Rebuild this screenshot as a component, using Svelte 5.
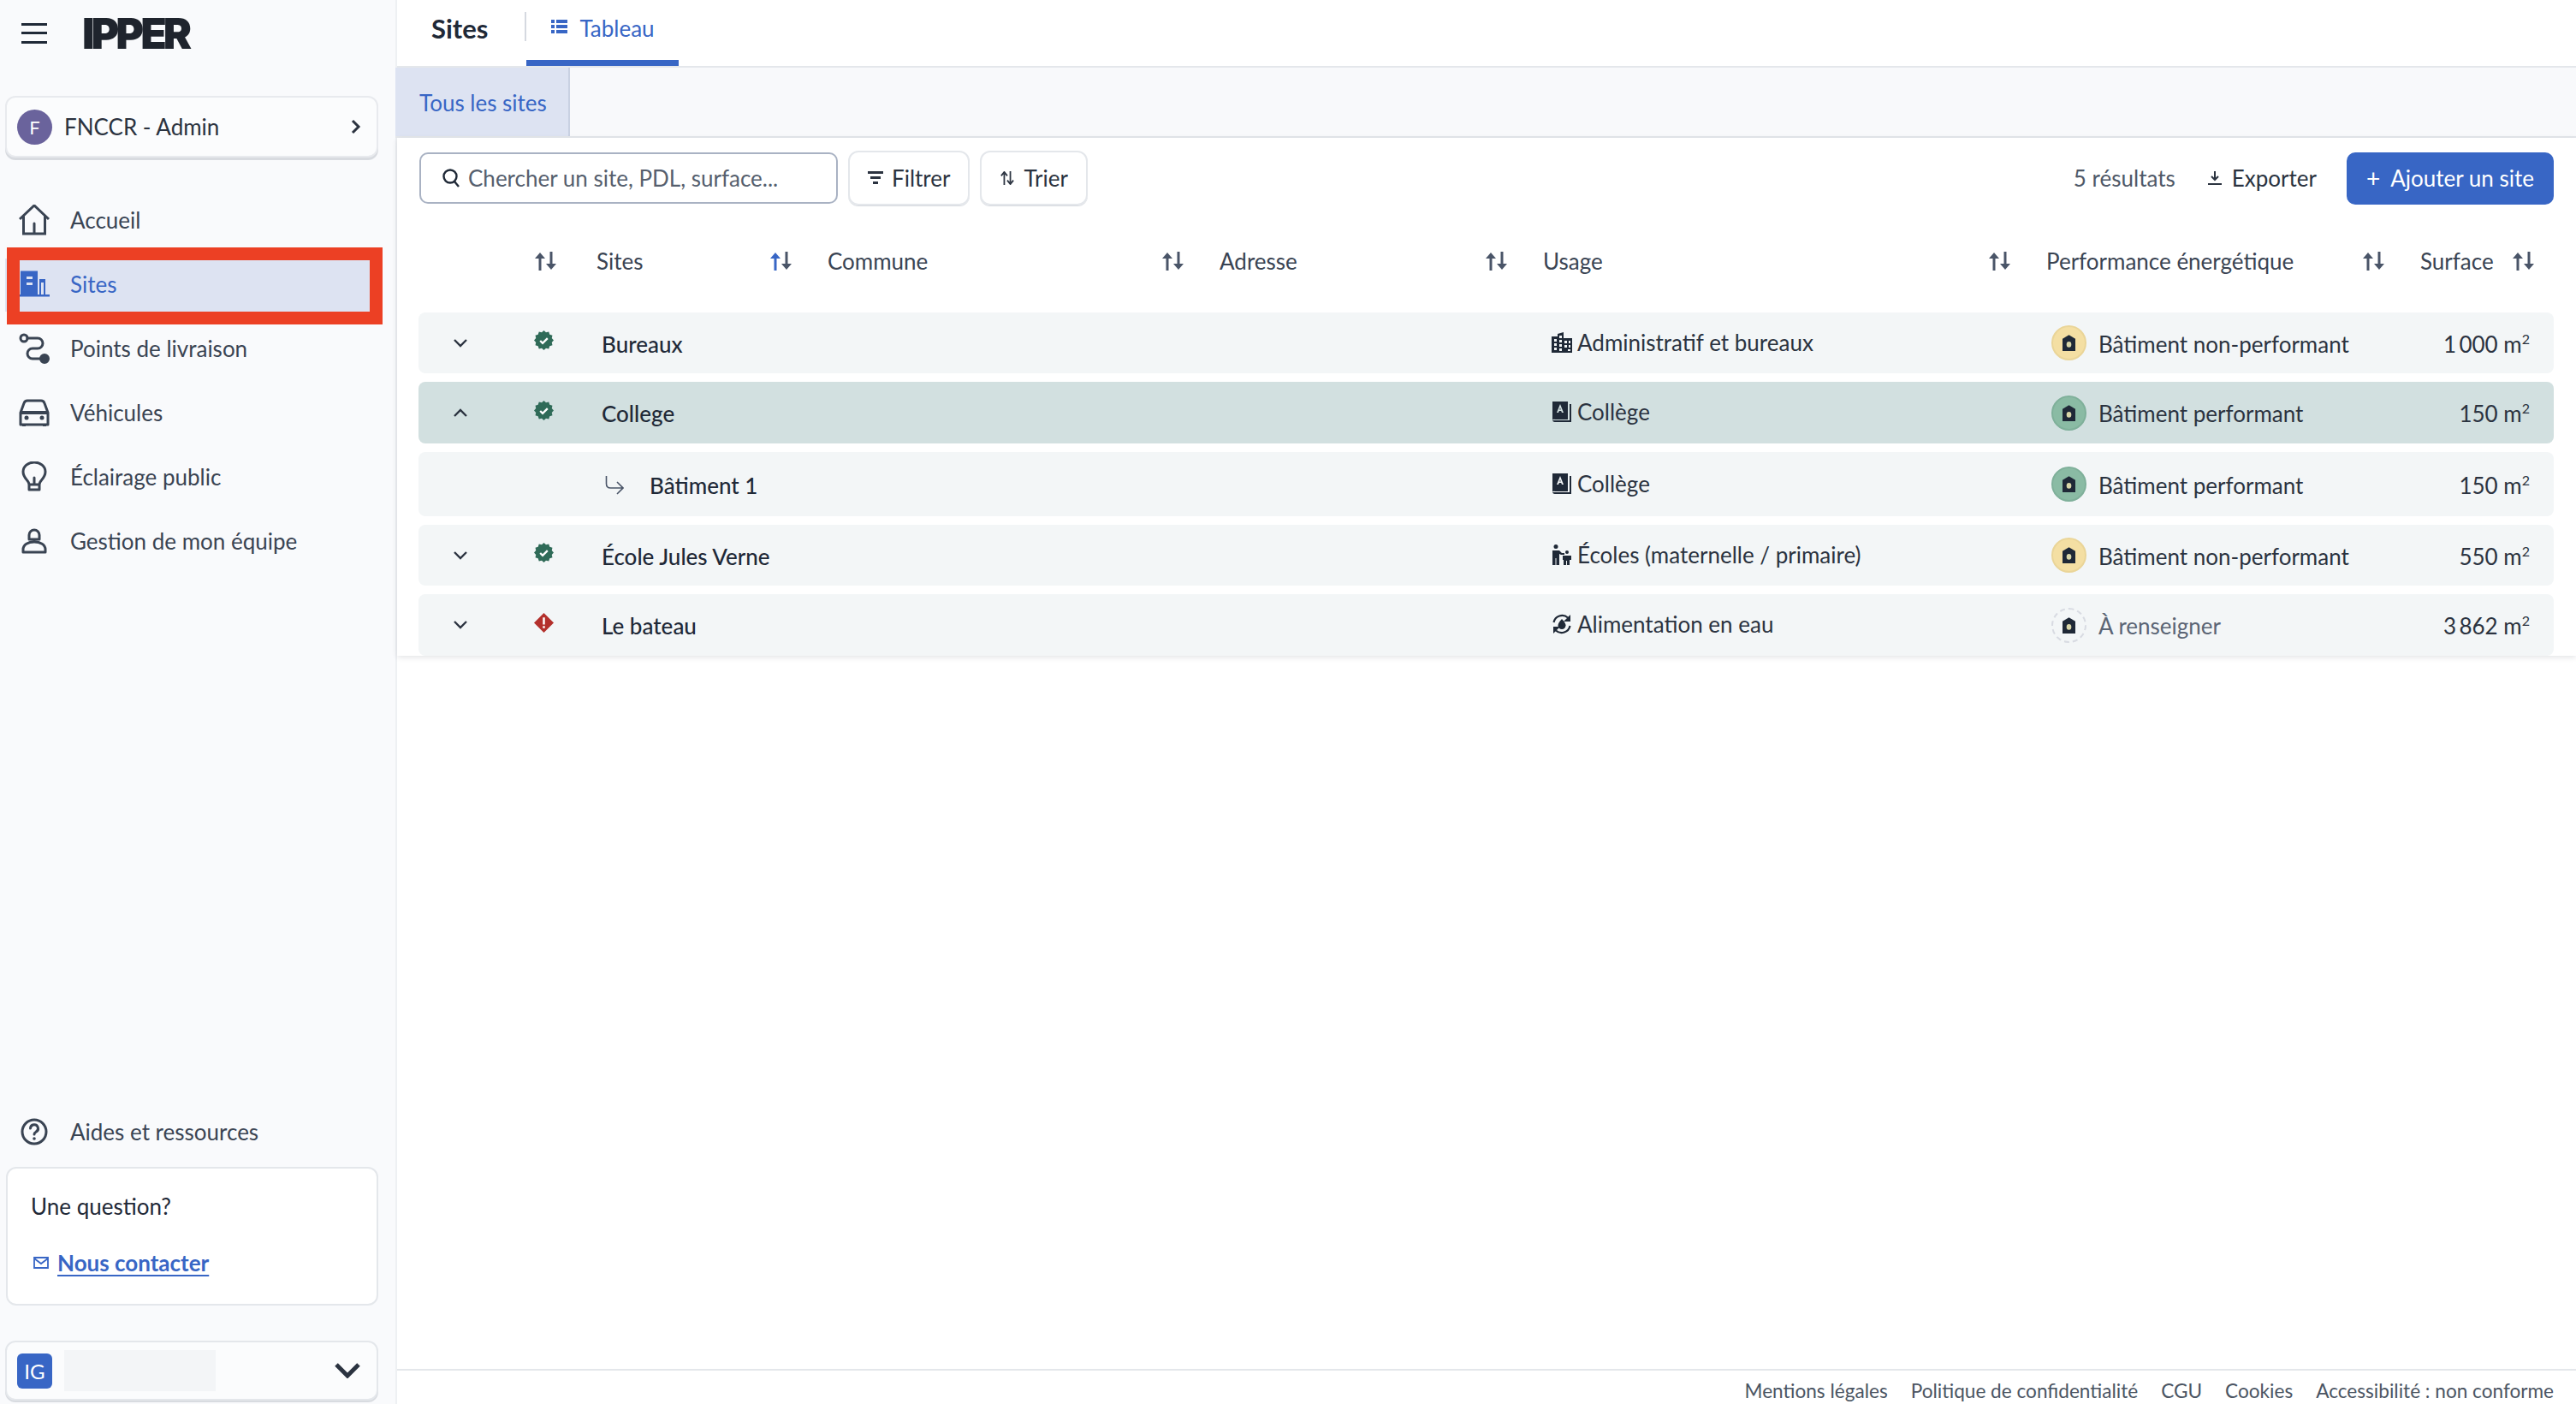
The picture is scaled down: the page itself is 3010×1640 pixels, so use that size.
<script>
  const nav = [
    { id: "home", label: "Accueil" },
    { id: "sites", label: "Sites", active: true },
    { id: "route", label: "Points de livraison" },
    { id: "car", label: "Véhicules" },
    { id: "bulb", label: "Éclairage public" },
    { id: "user", label: "Gestion de mon équipe" }
  ];

  const columns = [
    { label: "Sites", active: true },
    { label: "Commune" },
    { label: "Adresse" },
    { label: "Usage" },
    { label: "Performance énergétique" },
    { label: "Surface" }
  ];

  const rows = [
    { name: "Bureaux", h: 71, chevron: "down", status: "ok", usageIcon: "office", usage: "Administratif et bureaux", perf: "bad", perfLabel: "Bâtiment non-performant", surface: "1\u2009000" },
    { name: "College", h: 72, open: true, chevron: "up", status: "ok", usageIcon: "book", usage: "Collège", perf: "good", perfLabel: "Bâtiment performant", surface: "150" },
    { name: "Bâtiment 1", h: 75, child: true, usageIcon: "book", usage: "Collège", perf: "good", perfLabel: "Bâtiment performant", surface: "150" },
    { name: "École Jules Verne", h: 71, chevron: "down", status: "ok", usageIcon: "kids", usage: "Écoles (maternelle / primaire)", perf: "bad", perfLabel: "Bâtiment non-performant", surface: "550" },
    { name: "Le bateau", h: 72, chevron: "down", status: "err", usageIcon: "water", usage: "Alimentation en eau", perf: "none", perfLabel: "À renseigner", surface: "3\u2009862" }
  ];

  const footerLinks = ["Mentions légales", "Politique de confidentialité", "CGU", "Cookies", "Accessibilité : non conforme"];

  // scalloped badge outline
  const star = Array.from({ length: 24 }, (_, i) => {
    const a = (i * Math.PI) / 12;
    const r = i % 2 ? 10 : 12;
    return `${(12 + r * Math.sin(a)).toFixed(2)},${(12 - r * Math.cos(a)).toFixed(2)}`;
  }).join(" ");
</script>

{#snippet navIcon(id)}
  <svg class="nav-icon" viewBox="0 0 36 36" fill="none" stroke="currentColor" stroke-width="3" stroke-linejoin="round" stroke-linecap="round">
    {#if id === "home"}
      <path d="M1 17 18 1l17 16" stroke-linecap="butt" stroke-linejoin="miter" />
      <path d="M5.500 14v20h25V14M18 34V22" stroke-linejoin="miter" />
    {:else if id === "sites"}
      <path fill="currentColor" stroke="none" d="M2 2.500h20V30H2zM24 12h7v18h-7z" />
      <path fill="#dde3f2" stroke="none" d="M9 9h7v3H9zM9 16h7v3H9zM26 16h3v14h-3z" />
      <path fill="currentColor" stroke="none" d="M0 30h36v2.500H0z" />
    {:else if id === "route"}
      <circle cx="6" cy="6" r="4" />
      <circle cx="30" cy="30" r="4.500" fill="currentColor" />
      <path d="M10 6h12a6 6 0 0 1 0 12h-6a6 6 0 0 0 0 12h9" />
    {:else if id === "car"}
      <path d="M2 18 6 7q1-3 4-3h16q3 0 4 3l4 11v14H2z" />
      <path d="M2 18h32M6 32v2M30 32v2" stroke-width="4" stroke-linecap="butt" />
      <circle cx="9" cy="24" r="2.500" fill="currentColor" stroke="none" />
      <circle cx="27" cy="24" r="2.500" fill="currentColor" stroke="none" />
    {:else if id === "bulb"}
      <path d="M12 27c0-5-7-7-7-15a13 11 0 0 1 26 0c0 8-7 10-7 15zM12 27v6h12v-6M18 27v-8" />
    {:else if id === "user"}
      <path d="M12 11a6 6 0 0 1 12 0v5H12zM5 28c0-6 6-9 13-9s13 3 13 9v3H5z" />
    {:else if id === "help"}
      <circle cx="18" cy="18" r="14" />
      <path d="M13.500 14a4.500 4.500 0 1 1 6.500 4.200c-1.300.7-2 1.300-2 2.800" />
      <circle cx="18" cy="26" r="1.800" fill="currentColor" stroke="none" />
    {/if}
  </svg>
{/snippet}

{#snippet sortIcon(active)}
  <svg class="sort" viewBox="0 0 27 22" fill="none" stroke="#4a5568" stroke-width="3">
    <path d="M7 22V3" stroke={active ? "#3866c5" : "#4a5568"} />
    <path d="M1 8 7 1l6 7z" fill={active ? "#3866c5" : "#4a5568"} stroke="none" />
    <path d="M20 0v19" />
    <path d="M14 14l6 7 6-7z" fill="#4a5568" stroke="none" />
  </svg>
{/snippet}

{#snippet usageIcon(id)}
  <svg class="usage-icon" viewBox="0 0 24 24" fill="#1f2937">
    {#if id === "office"}
      <path fill-rule="evenodd" d="M0 5h7V2l7-2v7h10v17H0zM3 8v3h3V8zM3 13v3h3v-3zM3 18v3h3v-3zM9 4v3h3V4zM9 9v3h3V9zM15 10v3h3v-3zM20 10v3h2v-3zM9 14v3h3v-3zM15 15v3h3v-3zM20 15v3h2v-3zM9 19v3h3v-3zM19 20v2h3v-2z" />
    {:else if id === "book"}
      <path fill-rule="evenodd" d="M1 0h18v21H4a3 3 0 0 0-3 .500zM10 3 6 13h2l.8-2h2.400l.8 2h2zM9.300 9.500 10 7l.7 2.500z" />
      <path d="M21 3h2v21H4a3 3 0 0 1-3-2h20z" />
    {:else if id === "kids"}
      <circle cx="5" cy="2.500" r="2.500" />
      <path d="M1 7h8l3 3 3 0v2h-4l-2-1v13H5.500v-8h-1v8H1z" />
      <circle cx="18" cy="9" r="2" />
      <path d="M13 13h10v5h-2v6h-3v-5h-1v5h-3v-6h-1z" />
    {:else if id === "water"}
      <path d="M2.500 10A10 10 0 0 1 19 4.500M21.500 14A10 10 0 0 1 5 19.500" fill="none" stroke="#1f2937" stroke-width="2.200" />
      <path d="M22 1v8h-8zM2 23v-8h8z" />
      <path d="M12 6c3 3.500 4.500 5.500 4.500 7.500a4.500 4.500 0 0 1-9 0C7.500 11.500 9 9.500 12 6z" />
    {/if}
  </svg>
{/snippet}

<div class="page">
  <aside class="sidebar">
    <div class="brand">
      <svg class="burger" viewBox="0 0 30 24" fill="#1f2937"><path d="M0 0h30v3H0zM0 10h30v3H0zM0 21h30v3H0z" /></svg>
      <span class="logo">IPPER</span>
    </div>

    <button class="org">
      <span class="org-avatar">F</span>
      <span class="org-name">FNCCR - Admin</span>
      <svg class="org-chevron" viewBox="0 0 12 18" fill="none" stroke="#2b3340" stroke-width="3"><path d="M2 2l7 7-7 7" /></svg>
    </button>

    <nav class="nav">
      {#each nav as item}
        <a class="nav-item" class:active={item.active} href="#{item.id}">
          {@render navIcon(item.id)}
          <span>{item.label}</span>
        </a>
      {/each}
      <div class="highlight"></div>
    </nav>

    <div class="side-bottom">
      <a class="nav-item" href="#help">
        {@render navIcon("help")}
        <span>Aides et ressources</span>
      </a>
      <div class="help-card">
        <p class="help-title">Une question?</p>
        <p class="help-link">
          <svg viewBox="0 0 18 14" fill="none" stroke="#3866c5" stroke-width="1.800"><path d="M1 1h16v12H1zM1 2l8 6 8-6" /></svg>
          <a href="#contact">Nous contacter</a>
        </p>
      </div>
      <button class="account">
        <span class="account-badge">IG</span>
        <span class="account-name"></span>
        <svg class="account-chevron" viewBox="0 0 30 18" fill="none" stroke="#2b3340" stroke-width="5"><path d="M2 2l13 13L28 2" /></svg>
      </button>
    </div>
  </aside>

  <main class="main">
    <header class="topbar">
      <h1>Sites</h1>
      <a class="tab" href="#tableau">
        <svg viewBox="0 0 19 16" fill="#3866c5"><path d="M0 0h4v4H0zM6 0h13v4H6zM0 6h4v4H0zM6 6h13v4H6zM0 12h4v4H0zM6 12h13v4H6z" /></svg>
        Tableau
      </a>
    </header>

    <div class="subtabs">
      <span class="subtab">Tous les sites</span>
    </div>

    <section class="table-wrap">
      <div class="toolbar">
        <label class="search">
          <svg viewBox="0 0 20 22" fill="none" stroke="#1f2937" stroke-width="2.400"><circle cx="9" cy="9" r="7.500" /><path d="M14 15l5 6" /></svg>
          <span>Chercher un site, PDL, surface...</span>
        </label>
        <button class="btn">
          <svg viewBox="0 0 18 16" fill="#2b3340"><path d="M0 0h18v3H0zM3 6h12v3H3zM6 12h6v3H6z" /></svg>
          Filtrer
        </button>
        <button class="btn">
          <svg viewBox="0 0 18 18" fill="none" stroke="#2b3340" stroke-width="2"><path d="M5 18V3M1 6l4-5 4 5M13 0v15M9 12l4 5 4-5" /></svg>
          Trier
        </button>
        <span class="count">5 résultats</span>
        <button class="export">
          <svg viewBox="0 0 16 16" fill="none" stroke="#2b3340" stroke-width="2"><path d="M8 0v9M4 6l4 4 4-4M0 15h16" /></svg>
          Exporter
        </button>
        <button class="primary"><span class="plus">+</span>Ajouter un site</button>
      </div>

      <div class="grid head">
        <div></div>
        <div class="status-sort">{@render sortIcon(false)}</div>
        {#each columns as col}
          <div class="th">
            <span>{col.label}</span>
            {@render sortIcon(col.active)}
          </div>
        {/each}
      </div>

      <div class="rows">
        {#each rows as r}
          <div class="grid row" class:open={r.open} style="height: {r.h}px">
            <div class="toggle">
              {#if r.chevron}
                <svg viewBox="0 0 16 10" fill="none" stroke="#2b3340" stroke-width="2.400">
                  <path d={r.chevron === "up" ? "M1 9l7-7 7 7" : "M1 1l7 7 7-7"} />
                </svg>
              {/if}
            </div>
            <div class="status">
              {#if r.status === "ok"}
                <svg viewBox="0 0 24 24"><polygon points={star} fill="#2f6b58" /><path d="M7.500 12.500l3 3 6-6" fill="none" stroke="#fff" stroke-width="2.400" /></svg>
              {:else if r.status === "err"}
                <svg viewBox="0 0 24 24"><path d="M12 0 24 12 12 24 0 12z" fill="#b3302c" /><path d="M10.700 5.500h2.600v8.500h-2.600zM10.700 15.800h2.600v2.700h-2.600z" fill="#fff" /></svg>
              {/if}
            </div>
            <div class="name-cell" class:child={r.child}>
              {#if r.child}
                <svg viewBox="0 0 22 22" fill="none" stroke="#4a5568" stroke-width="1.600"><path d="M1.500 0v9q0 5 5 5H20M14 7l7 7-7 7" /></svg>
              {/if}
              <span>{r.name}</span>
            </div>
            <div></div>
            <div></div>
            <div class="usage">
              {@render usageIcon(r.usageIcon)}
              <span>{r.usage}</span>
            </div>
            <div class="perf" class:muted={r.perf === "none"}>
              <span class="perf-badge {r.perf}">
                <svg viewBox="0 0 16 20"><path d="M8 0l8 5v15H0V5z" fill="#1f2937" /><ellipse cx="8" cy="12" rx="3" ry="3.500" fill="#d9d6a8" /></svg>
              </span>
              <span class="perf-label">{r.perfLabel}</span>
            </div>
            <div class="surface">{r.surface} m<sup>2</sup></div>
          </div>
        {/each}
      </div>
    </section>

    <footer class="footer">
      {#each footerLinks as link}
        <a href="#footer">{link}</a>
      {/each}
    </footer>
  </main>
</div>

<style>
  :global(body) {
    margin: 0;
    background: #fff;
  }

  .page {
    display: flex;
    width: 3010px;
    height: 1640px;
    overflow: hidden;
    font-family: "Lato", "Liberation Sans", sans-serif;
    font-size: 26px;
    color: #2b3340;
  }

  a {
    color: inherit;
    text-decoration: none;
  }

  button {
    font: inherit;
    color: inherit;
    background: none;
    border: none;
    padding: 0;
  }

  /* sidebar */
  .sidebar {
    flex: none;
    width: 462px;
    height: 1640px;
    box-sizing: border-box;
    display: flex;
    flex-direction: column;
    background: #f9fafc;
  }

  .brand {
    display: flex;
    align-items: center;
    height: 78px;
    padding-left: 25px;
  }

  .burger {
    width: 30px;
    height: 24px;
  }

  .logo {
    margin-left: 41px;
    font-family: "Inter", sans-serif;
    font-weight: 900;
    font-size: 50px;
    letter-spacing: -4px;
    line-height: 1;
    color: #1f242d;
  }

  .org {
    display: flex;
    align-items: center;
    box-sizing: border-box;
    width: 436px;
    height: 72px;
    margin: 34px 0 0 6px;
    padding: 0 18px 0 12px;
    background: #fbfcfd;
    border: 2px solid #e8eaee;
    border-radius: 12px;
    box-shadow: 0 3px 0 #d8dbe0;
  }

  .org-avatar {
    display: flex;
    align-items: center;
    justify-content: center;
    width: 41px;
    height: 41px;
    border-radius: 50%;
    background: #6a639c;
    color: #fff;
    font-size: 22px;
  }

  .org-name {
    margin-left: 14px;
    flex: 1;
    text-align: left;
  }

  .org-chevron {
    width: 12px;
    height: 18px;
  }

  .nav {
    position: relative;
    display: flex;
    flex-direction: column;
    gap: 15px;
    margin-top: 43px;
  }

  .nav-item {
    display: flex;
    align-items: center;
    height: 60px;
    margin: 0 22px 0 6px;
    padding-left: 16px;
    color: #3a4453;
  }

  .nav-item span {
    margin-left: 24px;
  }

  .nav-item.active {
    background: #dde3f2;
    box-shadow: 0 2px 0 #dde3f2;
    color: #3866c5;
  }

  .nav-icon {
    width: 36px;
    height: 36px;
    flex: none;
  }

  /* red annotation drawn over the active entry */
  .highlight {
    position: absolute;
    left: 8px;
    top: 62px;
    width: 439px;
    height: 90px;
    box-sizing: border-box;
    border: 15px solid #ec4024;
  }

  .side-bottom {
    margin-top: auto;
    display: flex;
    flex-direction: column;
  }

  .help-card {
    box-sizing: border-box;
    width: 435px;
    height: 162px;
    margin: 11px 0 0 7px;
    padding: 28px 27px 0;
    background: #fff;
    border: 2px solid #e4e7eb;
    border-radius: 12px;
  }

  .help-title {
    margin: 0;
    color: #1f2937;
  }

  .help-link {
    display: flex;
    align-items: center;
    gap: 10px;
    margin: 34px 0 0 3px;
    font-weight: 700;
    color: #3866c5;
  }

  .help-link svg {
    width: 18px;
    height: 14px;
  }

  .help-link a {
    text-decoration: underline;
    text-underline-offset: 4px;
  }

  .account {
    display: flex;
    align-items: center;
    box-sizing: border-box;
    width: 436px;
    height: 70px;
    margin: 41px 0 4px 6px;
    padding: 0 19px 0 12px;
    background: #fbfcfd;
    border: 2px solid #e4e7eb;
    border-radius: 12px;
    box-shadow: 0 2px 0 #d8dbe0;
  }

  .account-badge {
    display: flex;
    align-items: center;
    justify-content: center;
    width: 41px;
    height: 41px;
    border-radius: 6px;
    background: #3866c5;
    color: #fff;
    font-size: 24px;
  }

  .account-name {
    width: 177px;
    height: 48px;
    margin-left: 14px;
    background: #f3f5f7;
  }

  .account-chevron {
    width: 30px;
    height: 18px;
    margin-left: auto;
  }

  /* main */
  .main {
    flex: 1;
    min-width: 0;
    display: flex;
    flex-direction: column;
    border-left: 2px solid #eef0f3;
  }

  .topbar {
    display: flex;
    align-items: flex-start;
    height: 79px;
    box-sizing: border-box;
    padding-left: 40px;
    border-bottom: 2px solid #e4e7eb;
  }

  .topbar h1 {
    margin: 14px 0 0;
    padding: 2px 43px 0 0;
    border-right: 2px solid #d5d9e0;
    box-sizing: border-box;
    height: 34px;
    line-height: 34px;
    font-size: 31px;
    font-weight: 700;
    color: #1f2937;
  }

  .tab {
    display: flex;
    align-items: flex-start;
    gap: 14px;
    box-sizing: border-box;
    height: 77px;
    padding: 18px 28px 0 29px;
    line-height: 30px;
    color: #3866c5;
    border-bottom: 7px solid #3866c5;
  }

  .tab svg {
    width: 19px;
    height: 16px;
    margin-top: 5px;
  }

  .subtabs {
    display: flex;
    height: 82px;
    margin-left: -2px;
    box-sizing: border-box;
    background: #f8f9fb;
    border-bottom: 2px solid #e4e7eb;
  }

  .subtab {
    display: flex;
    align-items: center;
    width: 204px;
    box-sizing: border-box;
    padding: 1px 0 0 28px;
    background: #dde3f2;
    color: #3866c5;
    border-right: 2px solid #c9d1e2;
  }

  .table-wrap {
    padding: 15px 26px 0 25px;
    box-shadow: 0 2px 6px rgba(30, 40, 60, 0.12);
  }

  .toolbar {
    display: flex;
    align-items: center;
    height: 64px;
  }

  .search {
    display: flex;
    align-items: center;
    box-sizing: border-box;
    width: 489px;
    height: 60px;
    margin-left: 1px;
    padding-left: 25px;
    border: 2px solid #a9b2c3;
    border-radius: 10px;
    color: #565f6e;
  }

  .search svg {
    width: 20px;
    height: 22px;
    margin-right: 10px;
  }

  .btn {
    display: flex;
    align-items: center;
    gap: 10px;
    height: 64px;
    box-sizing: border-box;
    margin-left: 12px;
    padding: 0 21px;
    border: 2px solid #e4e7eb;
    border-radius: 12px;
    box-shadow: 0 1px 0 #d8dbe0;
  }

  .btn svg {
    width: 18px;
    height: 16px;
  }

  .count {
    margin-left: auto;
    color: #4f5968;
  }

  .export {
    display: flex;
    align-items: center;
    gap: 12px;
    margin-left: 38px;
  }

  .export svg {
    width: 16px;
    height: 16px;
  }

  .primary {
    display: flex;
    align-items: center;
    justify-content: center;
    gap: 12px;
    width: 242px;
    height: 61px;
    margin-left: 35px;
    background: #3866c5;
    color: #fff;
    border-radius: 10px;
  }

  .plus {
    font-size: 28px;
    line-height: 1;
  }

  .grid {
    display: grid;
    grid-template-columns: 131px 77px 270px 458px 378px 588px 437px 156px;
    align-items: center;
  }

  .head {
    height: 60px;
    margin: 35px 0 30px;
  }

  .status-sort {
    padding-left: 4px;
    display: flex;
  }

  .th {
    display: flex;
    align-items: center;
    justify-content: space-between;
    padding-right: 41px;
    color: #3a4453;
  }

  .th:last-child {
    padding-right: 22px;
  }

  .sort {
    width: 27px;
    height: 22px;
    flex: none;
  }

  .rows {
    display: flex;
    flex-direction: column;
    gap: 10px;
  }

  .row {
    background: #f3f6f7;
    border-radius: 8px;
  }

  .row.open {
    background: #d2e0e0;
  }

  .toggle {
    padding-left: 41px;
    display: flex;
  }

  .toggle svg {
    width: 16px;
    height: 10px;
  }

  .status {
    display: flex;
    padding-left: 4px;
    margin-top: -6px;
  }

  .status svg {
    width: 23px;
    height: 23px;
  }

  .name-cell {
    display: flex;
    align-items: center;
    padding: 2px 0 0 6px;
    color: #1f2937;
    font-weight: 500;
    white-space: nowrap;
  }

  .name-cell.child {
    padding-left: 10px;
  }

  .name-cell.child svg {
    width: 22px;
    height: 22px;
    margin-right: 30px;
  }

  .usage {
    display: flex;
    align-items: center;
    gap: 6px;
    padding-left: 10px;
    white-space: nowrap;
    margin-top: -2px;
  }

  .usage-icon {
    width: 24px;
    height: 24px;
    flex: none;
  }

  .perf {
    display: flex;
    align-items: center;
    gap: 14px;
    padding-left: 6px;
    white-space: nowrap;
  }

  .perf-label {
    padding-top: 2px;
  }

  .perf.muted {
    color: #5b6575;
  }

  .perf-badge {
    display: flex;
    align-items: center;
    justify-content: center;
    box-sizing: border-box;
    width: 41px;
    height: 41px;
    border-radius: 50%;
    border: 2px solid transparent;
  }

  .perf-badge svg {
    width: 15px;
    height: 19px;
  }

  .perf-badge.bad {
    background: #f4dfa3;
    border-color: #ead598;
  }

  .perf-badge.good {
    background: #8abba4;
    border-color: #7fb09a;
  }

  .perf-badge.none {
    border: 2px dashed #d8dbe2;
  }

  .surface {
    text-align: right;
    padding: 2px 28px 0 0;
    white-space: nowrap;
  }

  .surface sup {
    font-size: 16px;
    line-height: 0;
  }

  .footer {
    margin-top: auto;
    display: flex;
    justify-content: flex-end;
    gap: 27px;
    height: 41px;
    box-sizing: border-box;
    padding: 12px 26px 0 0;
    border-top: 2px solid #e4e7eb;
    font-size: 22.600px;
    line-height: 24px;
    color: #4b5563;
  }
</style>
